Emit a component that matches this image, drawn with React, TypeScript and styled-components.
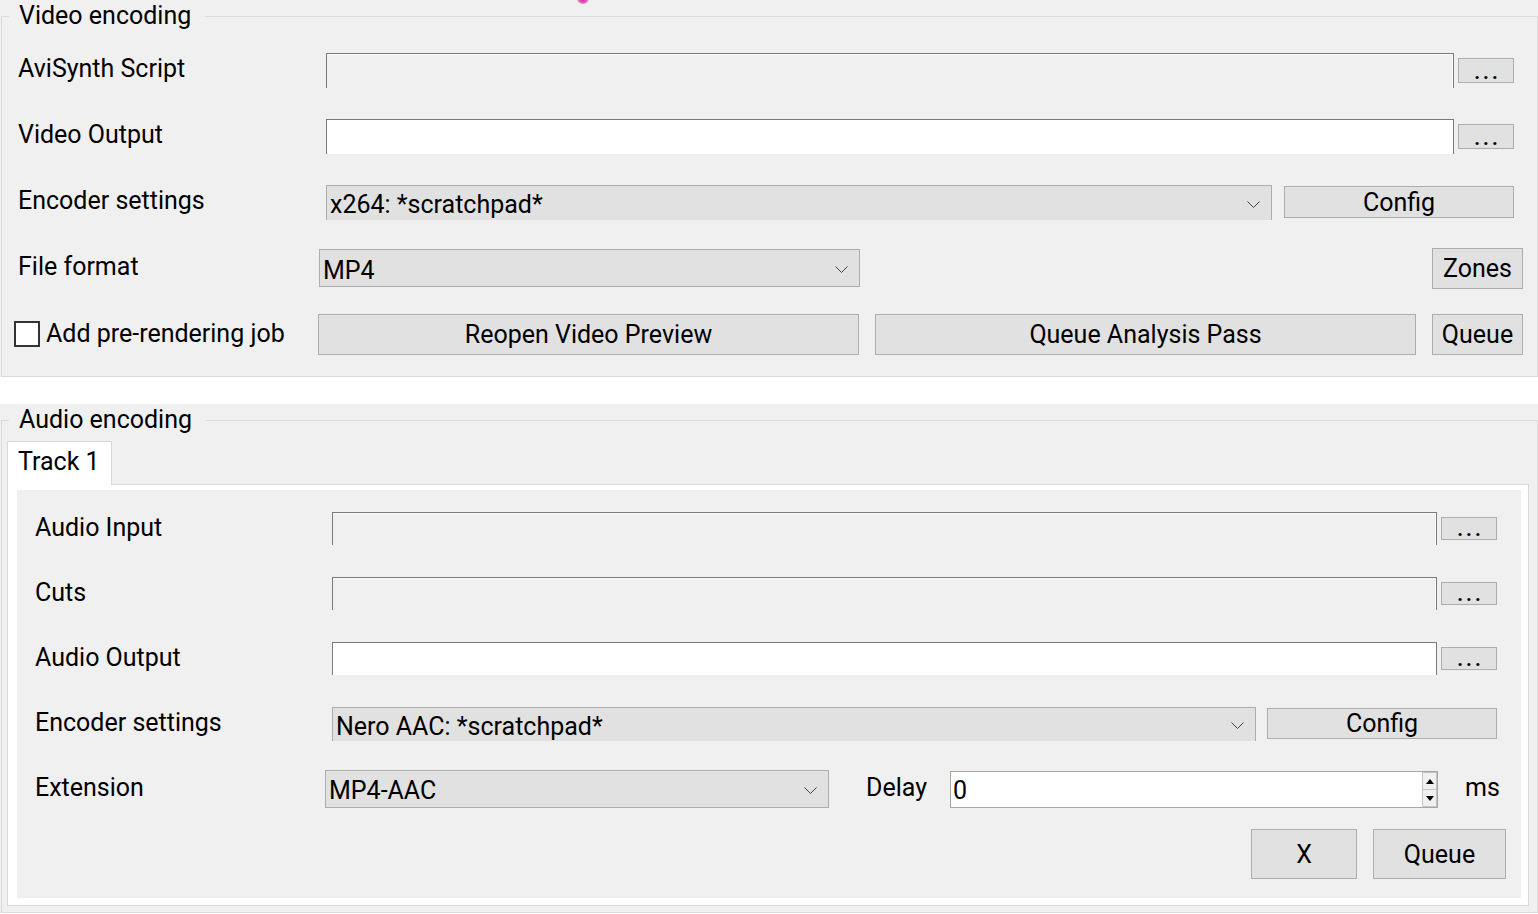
import { createGlobalStyle, styled } from "styled-components";

const GlobalStyle = createGlobalStyle`
  html, body {
    margin: 0;
    padding: 0;
    background: #ffffff;
  }
  body {
    width: 1538px;
    height: 914px;
    overflow: hidden;
    font-family: Roboto, "Noto Sans", Arial, sans-serif;
    font-size: 25px;
    color: #000000;
  }
  * {
    box-sizing: border-box;
  }
`;

const Page = styled.div`
  position: relative;
  width: 1538px;
`;

const Panel = styled.div<{ $h: number; $mt?: number }>`
  height: ${(p) => p.$h}px;
  margin-top: ${(p) => p.$mt ?? 0}px;
  padding-left: 1px;
  background: #f0f0f0;
`;

const Group = styled.fieldset<{ $pt: number; $pb: number }>`
  margin: 0;
  height: 100%;
  min-width: 0;
  padding: ${(p) => p.$pt}px 0 ${(p) => p.$pb}px 0;
  border: 1px solid #dcdcdc;
`;

const Legend = styled.legend`
  margin-left: 7px;
  padding: 0 14px 0 10px;
  height: 32px;
  line-height: 32px;
  font-size: 25px;
`;

const Row = styled.div<{ $h: number; $pl: number; $pr?: number }>`
  display: flex;
  align-items: center;
  height: ${(p) => p.$h}px;
  padding-left: ${(p) => p.$pl}px;
  padding-right: ${(p) => p.$pr ?? 0}px;
`;

const FieldLabel = styled.div<{ $w: number }>`
  flex: none;
  width: ${(p) => p.$w}px;
  padding-bottom: 3px;
  white-space: nowrap;
`;

const TextBox = styled.div<{ $w: number; $h: number; $white?: boolean }>`
  flex: none;
  width: ${(p) => p.$w}px;
  height: ${(p) => p.$h}px;
  background: ${(p) => (p.$white ? "#ffffff" : "#f0f0f0")};
  border: 1px solid #7a7a7a;
  border-bottom: none;
  box-shadow: ${(p) => (p.$white ? "none" : "inset -1px 1px 0 #fafafa")};
`;

const Button = styled.button<{ $w: number; $h: number; $ml?: number }>`
  flex: none;
  width: ${(p) => p.$w}px;
  height: ${(p) => p.$h}px;
  margin-left: ${(p) => (p.$ml === undefined ? "0" : p.$ml < 0 ? "auto" : `${p.$ml}px`)};
  padding: 0;
  display: flex;
  align-items: center;
  justify-content: center;
  background: #e1e1e1;
  border: 1px solid #adadad;
  border-radius: 0;
  font-family: inherit;
  font-size: 25px;
  line-height: 1;
  color: #000000;
`;

const DotsButton = styled(Button)`
  align-items: flex-end;
  padding-left: 3px;
  font-size: 20px;
  letter-spacing: 3px;
  font-weight: 700;
`;

const Combo = styled.div<{ $w: number; $h: number; $clip?: boolean }>`
  flex: none;
  width: ${(p) => p.$w}px;
  height: ${(p) => p.$h}px;
  display: flex;
  align-items: center;
  justify-content: space-between;
  padding: 4px 11px 0 3px;
  background: #e1e1e1;
  border: 1px solid #adadad;
  border-bottom: ${(p) => (p.$clip ? "none" : "1px solid #adadad")};
  white-space: nowrap;
`;

const CheckWrap = styled.label`
  flex: none;
  width: 304px;
  display: flex;
  align-items: center;
  gap: 6px;
  padding-bottom: 2px;
  white-space: nowrap;
`;

const CheckBox = styled.span`
  flex: none;
  width: 26px;
  height: 26px;
  margin-top: 2px;
  background: #ffffff;
  border: 2px solid #333333;
`;

const TabStrip = styled.div`
  display: flex;
  padding-left: 5px;
`;

const Tab = styled.div`
  position: relative;
  z-index: 1;
  height: 44px;
  margin-bottom: -1px;
  padding: 0 11px 4px 10px;
  display: flex;
  align-items: center;
  background: #ffffff;
  border: 1px solid #d9d9d9;
  border-bottom: none;
`;

const TabPanel = styled.div`
  margin-left: 5px;
  width: 1522px;
  padding: 5px 7px 7px 9px;
  background: #ffffff;
  border: 1px solid #d9d9d9;
`;

const TabBody = styled.div`
  height: 408px;
  padding-top: 6px;
  background: #f0f0f0;
`;

const ButtonRow = styled.div`
  display: flex;
  justify-content: flex-end;
  gap: 16px;
  margin-top: 8px;
  padding-right: 15px;
`;

const InlineLabel = styled.div<{ $w?: number; $ml: number }>`
  flex: none;
  width: ${(p) => (p.$w ? `${p.$w}px` : "auto")};
  margin-left: ${(p) => p.$ml}px;
  padding-bottom: 3px;
`;

const SpinBox = styled.div`
  flex: none;
  width: 488px;
  height: 37px;
  margin-top: 2px;
  display: flex;
  background: #ffffff;
  border: 1px solid #a6a6a6;
`;

const SpinValue = styled.div`
  flex: 1;
  display: flex;
  align-items: center;
  padding: 2px 0 0 2px;
`;

const SpinArrows = styled.div`
  flex: none;
  width: 15px;
  display: flex;
  flex-direction: column;
`;

const SpinArrow = styled.div<{ $down?: boolean }>`
  flex: 1;
  display: flex;
  align-items: center;
  justify-content: center;
  background: #f0f0f0;
  border: 1px solid #c4c4c4;
  border-top: ${(p) => (p.$down ? "none" : "1px solid #c4c4c4")};

  &::after {
    content: "";
    width: 0;
    height: 0;
    border-left: 4px solid transparent;
    border-right: 4px solid transparent;
    ${(p) =>
      p.$down
        ? "border-top: 5px solid #000000;"
        : "border-bottom: 5px solid #000000;"}
  }
`;

const CursorBlob = styled.div`
  position: absolute;
  left: 577px;
  top: -6px;
  width: 12px;
  height: 10px;
  border-radius: 50%;
  background: radial-gradient(circle, #c0208a 0%, #e25bb5 45%, rgba(240, 150, 210, 0) 100%);
`;

function Chevron() {
  return (
    <svg width="13" height="8" viewBox="0 0 13 8">
      <polyline points="0.5,0.5 6.5,6.5 12.5,0.5" fill="none" stroke="#444444" strokeWidth="1" />
    </svg>
  );
}

export default function App() {
  return (
    <Page>
      <GlobalStyle />
      <CursorBlob />
      <Panel $h={377}>
        <Group $pt={5} $pb={9}>
          <Legend>Video encoding</Legend>
          <Row $h={66} $pl={16}>
            <FieldLabel $w={308}>AviSynth Script</FieldLabel>
            <TextBox $w={1128} $h={35} />
            <DotsButton $w={56} $h={25} $ml={4}>
              ...
            </DotsButton>
          </Row>
          <Row $h={66} $pl={16}>
            <FieldLabel $w={308}>Video Output</FieldLabel>
            <TextBox $w={1128} $h={35} $white />
            <DotsButton $w={56} $h={25} $ml={4}>
              ...
            </DotsButton>
          </Row>
          <Row $h={66} $pl={16}>
            <FieldLabel $w={308}>Encoder settings</FieldLabel>
            <Combo $w={946} $h={35} $clip>
              <span>x264: *scratchpad*</span>
              <Chevron />
            </Combo>
            <Button $w={230} $h={32} $ml={12}>
              Config
            </Button>
          </Row>
          <Row $h={66} $pl={16} $pr={14}>
            <FieldLabel $w={301}>File format</FieldLabel>
            <Combo $w={541} $h={38}>
              <span>MP4</span>
              <Chevron />
            </Combo>
            <Button $w={91} $h={41} $ml={-1}>
              Zones
            </Button>
          </Row>
          <Row $h={66} $pl={12}>
            <CheckWrap>
              <CheckBox />
              Add pre-rendering job
            </CheckWrap>
            <Button $w={541} $h={41}>
              Reopen Video Preview
            </Button>
            <Button $w={541} $h={41} $ml={16}>
              Queue Analysis Pass
            </Button>
            <Button $w={91} $h={41} $ml={16}>
              Queue
            </Button>
          </Row>
        </Group>
      </Panel>

      <Panel $h={509} $mt={27}>
        <Group $pt={5} $pb={6}>
          <Legend>Audio encoding</Legend>
          <TabStrip>
            <Tab>Track 1</Tab>
          </TabStrip>
          <TabPanel>
            <TabBody>
              <Row $h={65} $pl={18}>
                <FieldLabel $w={297}>Audio Input</FieldLabel>
                <TextBox $w={1105} $h={33} />
                <DotsButton $w={56} $h={23} $ml={4}>
                  ...
                </DotsButton>
              </Row>
              <Row $h={65} $pl={18}>
                <FieldLabel $w={297}>Cuts</FieldLabel>
                <TextBox $w={1105} $h={33} />
                <DotsButton $w={56} $h={23} $ml={4}>
                  ...
                </DotsButton>
              </Row>
              <Row $h={65} $pl={18}>
                <FieldLabel $w={297}>Audio Output</FieldLabel>
                <TextBox $w={1105} $h={33} $white />
                <DotsButton $w={56} $h={23} $ml={4}>
                  ...
                </DotsButton>
              </Row>
              <Row $h={65} $pl={18}>
                <FieldLabel $w={297}>Encoder settings</FieldLabel>
                <Combo $w={924} $h={34} $clip>
                  <span>Nero AAC: *scratchpad*</span>
                  <Chevron />
                </Combo>
                <Button $w={230} $h={31} $ml={11}>
                  Config
                </Button>
              </Row>
              <Row $h={65} $pl={18}>
                <FieldLabel $w={290}>Extension</FieldLabel>
                <Combo $w={504} $h={38}>
                  <span>MP4-AAC</span>
                  <Chevron />
                </Combo>
                <InlineLabel $w={84} $ml={37}>
                  Delay
                </InlineLabel>
                <SpinBox>
                  <SpinValue>0</SpinValue>
                  <SpinArrows>
                    <SpinArrow />
                    <SpinArrow $down />
                  </SpinArrows>
                </SpinBox>
                <InlineLabel $ml={27}>ms</InlineLabel>
              </Row>
              <ButtonRow>
                <Button $w={106} $h={50}>
                  X
                </Button>
                <Button $w={133} $h={50}>
                  Queue
                </Button>
              </ButtonRow>
            </TabBody>
          </TabPanel>
        </Group>
      </Panel>
    </Page>
  );
}
